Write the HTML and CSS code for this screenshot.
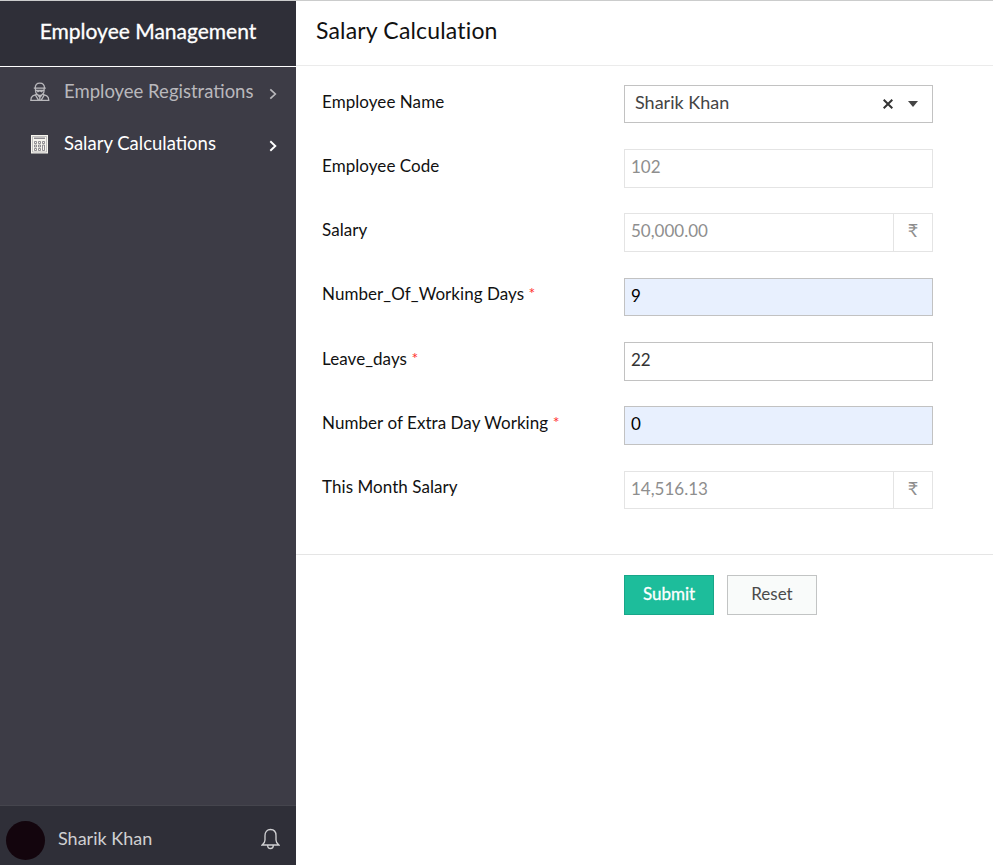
FILE: index.html
```html
<!DOCTYPE html>
<html lang="en">
<head>
<meta charset="utf-8">
<title>Salary Calculation</title>
<link rel="stylesheet" href="styles.css">
</head>
<body>
<div class="app">
  <aside class="sidebar">
    <div class="brand"><span>Employee Management</span></div>
    <nav class="nav">
      <a class="nav-item">
        <svg class="nav-icon" viewBox="0 0 20 20" fill="none" stroke="currentColor" stroke-width="1.3"><path d="M5.2 6.200C5.200 3 7 1.200 9.800 1.200s4.700 1.800 4.700 5M3.800 6.200h12M5.500 6.400v2c0 2.800 2 5 4.300 5s4.300-2.200 4.300-5v-2M5.700 8.400h8.200M7 8.500l1 1.200 1.800-1 1.800 1 1-1.200M6.600 12.400l-3.800 1.500C1.500 14.600.8 16.500.8 18.400h18c0-1.900-.7-3.800-2-4.500l-3.800-1.500M5.500 13.200l3 5M14.200 13.200l-3 5M8.500 13.800h2.700l-1.300 1.700zM9.800 15.500v3"/></svg>
        <span class="nav-text">Employee Registrations</span>
        <svg class="chevron" viewBox="0 0 8 12" fill="none" stroke="currentColor" stroke-width="1.7"><path d="M1.300 1.300L6.300 6l-5 4.700"/></svg>
      </a>
      <a class="nav-item active">
        <svg class="nav-icon" viewBox="0 0 20 20"><path fill="#f7f5ee" d="M1 1h17v18.500H1z"/><path fill="none" stroke="#8b8990" stroke-width=".5" d="M2.500 2.500h14v15.500h-14z"/><path fill="#8e8b91" d="M4 3.500h11v1.500H4z"/><path fill="none" stroke="#77757c" stroke-width=".8" d="M4.500 7.500h2v2h-2zM8.500 7.500h2v2h-2zM12.500 7.500h2v2h-2zM4.500 11h2v2h-2zM8.500 11h2v2h-2zM12.500 11h2v5.500h-2zM4.500 14.500h2v2h-2zM8.500 14.500h2v2h-2z"/></svg>
        <span class="nav-text">Salary Calculations</span>
        <svg class="chevron" viewBox="0 0 8 12" fill="none" stroke="currentColor" stroke-width="1.9"><path d="M1.300 1.300L6.300 6l-5 4.700"/></svg>
      </a>
    </nav>
    <div class="profile">
      <span class="avatar"></span>
      <span class="profile-name">Sharik Khan</span>
      <svg class="bell" viewBox="0 0 20 22" fill="none" stroke="currentColor" stroke-width="1.4"><path d="M1.200 17.300c2-1.500 3-2.800 3-5.300V7.500C4.200 3.500 6.500 1 10 1s5.800 2.500 5.800 6.500V12c0 2.500 1 3.800 3 5.300zM7 17.500c0 2.200 1.200 3.500 3 3.500s3-1.300 3-3.500"/></svg>
    </div>
  </aside>
  <main class="main">
    <header class="header"><h1>Salary Calculation</h1></header>
    <form class="form">
      <div class="row"><label>Employee Name</label><div class="field select"><span class="value">Sharik Khan</span><svg class="clear" viewBox="0 0 10 10" stroke="currentColor" stroke-width="2"><path d="M.7.7l8.600 8.600M9.300.7L.7 9.300"/></svg><span class="caret"></span></div></div>
      <div class="row"><label>Employee Code</label><div class="field readonly"><span class="value">102</span></div></div>
      <div class="row"><label>Salary</label><div class="field readonly"><span class="value">50,000.00</span><span class="unit">₹</span></div></div>
      <div class="row"><label>Number_Of_Working Days <span class="req">*</span></label><div class="field filled"><span class="value">9</span></div></div>
      <div class="row"><label>Leave_days <span class="req">*</span></label><div class="field"><span class="value">22</span></div></div>
      <div class="row"><label>Number of Extra Day Working <span class="req">*</span></label><div class="field filled"><span class="value">0</span></div></div>
      <div class="row"><label>This Month Salary</label><div class="field readonly"><span class="value">14,516.13</span><span class="unit">₹</span></div></div>
    </form>
    <footer class="actions">
      <button class="btn primary" type="button">Submit</button>
      <button class="btn" type="button">Reset</button>
    </footer>
  </main>
</div>
</body>
</html>
```
FILE: styles.css
```css
* { box-sizing: border-box; }
body { margin: 0; font-family: Lato, "Liberation Sans", sans-serif; font-size: 17px; color: #111; background: #fff; }
.app { display: flex; height: 865px; border-top: 1px solid #cbcccc; }
.sidebar { width: 296px; display: flex; flex-direction: column; background: #3d3c46; color: #fff; }
.brand { height: 66px; padding: 0 0 7px; display: flex; align-items: center; justify-content: center; background: #2f2f38; border-bottom: 1px solid #fff; font-size: 21px; -webkit-text-stroke: .3px; }
.nav { flex: 1; }
.nav-item { height: 52px; padding: 0 19px 2px 30px; display: flex; align-items: center; color: #b9b8bc; font-size: 18.5px; }
.nav-item.active { color: #fff; }
.nav-icon { width: 20px; height: 20px; margin-right: 14px; }
.nav-text { flex: 1; padding-bottom: 2px; white-space: nowrap; }
.chevron { width: 8px; height: 12px; margin-top: 3px; }
.profile { height: 60px; padding: 9px 16px 0 6px; display: flex; align-items: center; background: #2f2f38; border-top: 1px solid #45454d; color: #d0d0d2; font-size: 18px; }
.avatar { width: 39px; height: 39px; border-radius: 50%; background: #13050d; }
.profile-name { flex: 1; margin-left: 13px; padding-bottom: 4px; }
.bell { width: 19px; height: 22px; margin-bottom: 3px; }
.main { flex: 1; }
.header { height: 65px; padding: 0 20px 7px; display: flex; align-items: center; border-bottom: 1px solid #ebebeb; }
h1 { margin: 0; font-size: 23px; font-weight: 400; letter-spacing: .17px; }
.form { height: 489px; padding: 18.7px 60px 0 26px; border-bottom: 1px solid #e5e5e5; }
.row { height: 64.35px; display: grid; grid-template-columns: 302px 309px; align-items: start; }
label { padding-top: 6.7px; line-height: 20px; letter-spacing: .06px; white-space: nowrap; }
.row:first-child label { padding-top: 7.5px; }
.req { color: #ff3030; font-size: 16px; line-height: 1; vertical-align: 1px; }
.field { height: 38.5px; display: flex; align-items: stretch; border: 1px solid #c2c2c2; color: #333; line-height: 34px; }
.value { flex: 1; padding-left: 6px; }
.select { align-items: center; color: #444; }
.select .value { padding-left: 10px; padding-bottom: 4px; font-size: 18px; }
.clear { width: 10px; height: 10px; margin-right: 15px; color: #333; }
.caret { margin-right: 14px; border: 5px solid transparent; border-top: 6px solid #444; border-bottom: 0; }
.readonly { border-color: #e4e4e4; color: #8e8e8e; }
.filled { background: #e8f0fe; color: #000; }
.unit { width: 39px; border-left: 1px solid #e4e4e4; text-align: center; font-size: 18px; line-height: 33px; }
.actions { padding: 20px 0 0 328px; display: flex; gap: 13px; }
.btn { width: 90px; height: 40px; padding: 0 0 4px; border: 1px solid #c2c4c4; background: #f9fbfa; color: #4b4b4b; font: 17px Lato, sans-serif; }
.primary { background: #1dbd9b; border-color: #18a689; color: #fff; -webkit-text-stroke: .3px; }
```
